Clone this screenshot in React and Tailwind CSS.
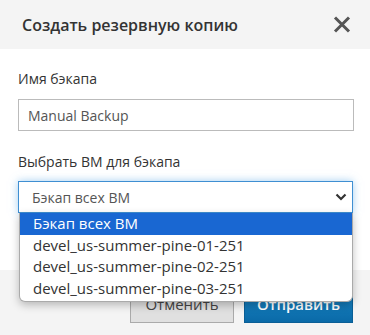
export default function App() {
  return (
    <div className="relative w-[370px] h-[335px] overflow-hidden bg-white font-['Open_Sans',sans-serif]">
      <div className="flex h-[49px] items-center justify-between bg-[#f4f4f4] pl-[22px] pr-[19px]">
        <div className="text-[16px] font-semibold text-[#333]">Создать резервную копию</div>
        <svg width="18" height="17" viewBox="0 0 18 17" className="text-[#555]">
          <path d="M2 1.5 L16 15.5 M16 1.5 L2 15.5" stroke="currentColor" strokeWidth="3" />
        </svg>
      </div>
      <div className="h-[221px] pl-[18px] pr-[16px] pt-[20px]">
        <div className="text-[14px] leading-[20px] text-[#333]">Имя бэкапа</div>
        <div className="mt-[10px] flex h-[32px] items-center border border-[#bbb] px-[9px] text-[14px] text-[#555]">
          Manual Backup
        </div>
        <div className="mt-[21px] text-[14px] leading-[20px] text-[#333]">Выбрать ВМ для бэкапа</div>
        <div className="mr-[1px] mt-[9px] flex h-[32px] items-center justify-between border border-[#3f8fd2] pl-[13px] pr-[5px] text-[14px] text-[#555] shadow-[0_0_8px_rgba(102,175,233,0.6)]">
          <span>Бэкап всех ВМ</span>
          <svg width="12" height="8" viewBox="0 0 12 8">
            <path d="M1.5 1.5 L6 6 L10.5 1.5" stroke="#333" strokeWidth="2.2" fill="none" />
          </svg>
        </div>
      </div>
      <div className="flex h-[65px] justify-end gap-[10px] bg-[#f4f4f4] pr-[17px] pt-[16px]">
        <div className="flex h-[37px] w-[104px] items-center justify-center border border-[#aaa] bg-[#e0e0e0] text-[15px] text-[#444]">
          Отменить
        </div>
        <div className="flex h-[37px] w-[109px] items-center justify-center border border-[#0a5f96] bg-gradient-to-b from-[#1b88c7] to-[#0a6aa8] text-[15px] font-semibold text-white">
          Отправить
        </div>
      </div>
      <div className="absolute left-[19px] top-[213px] w-[334px] overflow-hidden rounded-b-[6px] border border-t-0 border-[#aaa] bg-white pb-[2px] text-[15px] leading-[21.5px] shadow-[0_3px_8px_rgba(0,0,0,0.25)]">
        <div className="bg-[#1967d2] pl-[13px] text-white">Бэкап всех ВМ</div>
        <div className="pl-[13px] text-[#333]">devel_us-summer-pine-01-251</div>
        <div className="pl-[13px] text-[#333]">devel_us-summer-pine-02-251</div>
        <div className="pl-[13px] text-[#333]">devel_us-summer-pine-03-251</div>
      </div>
    </div>
  );
}
